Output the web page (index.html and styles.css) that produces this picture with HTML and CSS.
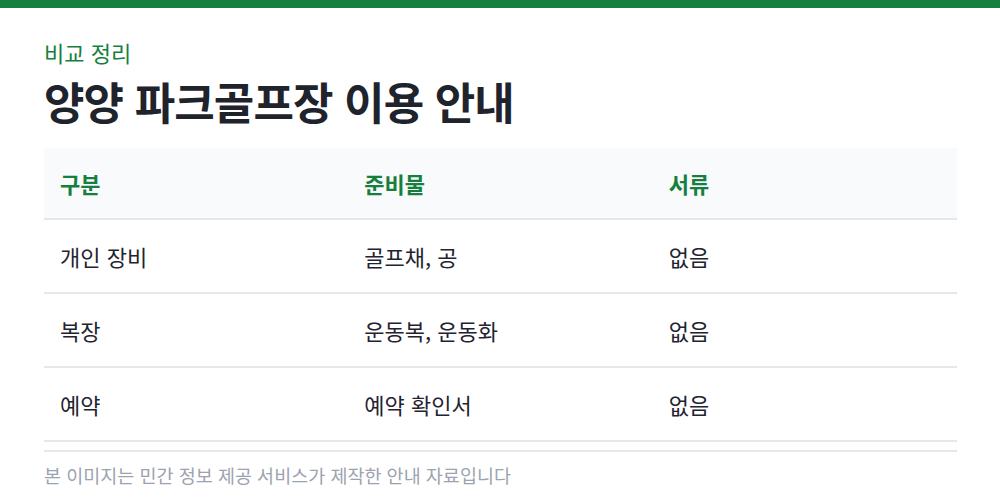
FILE: index.html
```html
<!DOCTYPE html>
<html lang="ko">
<head>
<meta charset="utf-8">
<title>양양 파크골프장 이용 안내</title>
<link rel="stylesheet" href="styles.css">
</head>
<body>
<div class="topbar"></div>
<main class="wrap">
  <p class="eyebrow">비교 정리</p>
  <h1 class="title">양양 파크골프장 이용 안내</h1>
  <table class="compare">
    <thead>
      <tr><th>구분</th><th>준비물</th><th>서류</th></tr>
    </thead>
    <tbody>
      <tr><td>개인 장비</td><td>골프채, 공</td><td>없음</td></tr>
      <tr><td>복장</td><td>운동복, 운동화</td><td>없음</td></tr>
      <tr><td>예약</td><td>예약 확인서</td><td>없음</td></tr>
    </tbody>
  </table>
  <footer class="note">본 이미지는 민간 정보 제공 서비스가 제작한 안내 자료입니다</footer>
</main>
</body>
</html>
```
FILE: styles.css
```css
* { box-sizing: border-box; }
html, body { margin: 0; padding: 0; background: #ffffff; }
body {
  font-family: "Noto Sans CJK KR", "Noto Sans", sans-serif;
  color: #1f2937;
}
.topbar { height: 8px; background: #15803d; }
.wrap { padding: 28px 43px 0 44px; }
.eyebrow {
  margin: 0;
  font-size: 22px;
  line-height: 32px;
  color: #15803d;
}
.title {
  margin: 5px 0 19px;
  font-size: 44px;
  line-height: 56px;
  font-weight: 700;
  letter-spacing: -0.02em;
  color: #1e232c;
}
.compare {
  width: 100%;
  border-collapse: collapse;
  table-layout: fixed;
}
.compare th {
  text-align: left;
  font-weight: 700;
  font-size: 22px;
  line-height: 30px;
  color: #15803d;
  background: #f8fafc;
  padding: 20px 16px;
  border-bottom: 2px solid #e5e7eb;
}
.compare td {
  font-size: 22px;
  line-height: 30px;
  color: #1f2430;
  padding: 21px 16px;
  border-bottom: 2px solid #e5e7eb;
}
.note {
  margin-top: 8px;
  border-top: 2px solid #e5e7eb;
  padding-top: 9px;
  font-size: 18.5px;
  line-height: 28px;
  color: #9ca3af;
}
```
